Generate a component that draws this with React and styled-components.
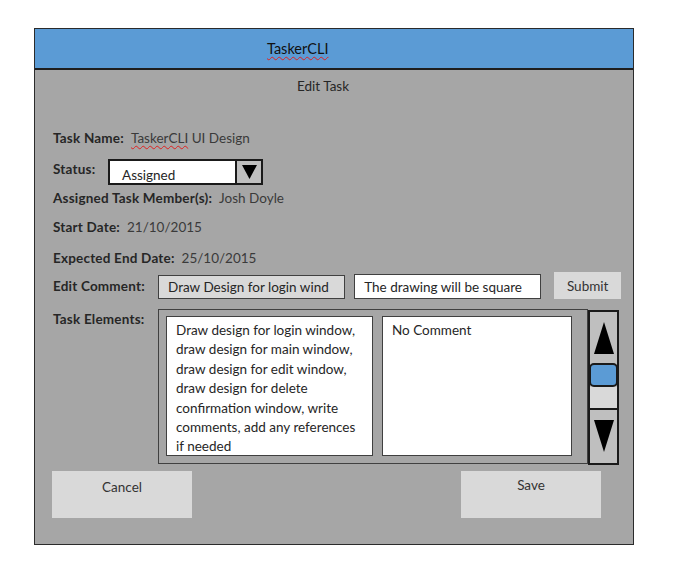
import React from 'react'
import styled, { createGlobalStyle } from 'styled-components'

const GlobalStyle = createGlobalStyle`
  body {
    margin: 0;
    background: #fff;
    font-family: Lato, "Open Sans", sans-serif;
  }
`

const Frame = styled.div`
  margin: 28px 0 0 34px;
  width: 600px;
  height: 517px;
  border: 1.5px solid #2b2b2b;
  box-sizing: border-box;
  display: flex;
  flex-direction: column;
  background: #a6a6a6;
`

const Header = styled.div`
  height: 41px;
  flex-shrink: 0;
  background: #5b9bd5;
  border-bottom: 2px solid #1f1f1f;
  box-sizing: border-box;
  display: flex;
  align-items: center;
  padding-left: 232px;
  font-size: 14.5px;
  color: #111;
`

const Misspelled = styled.span`
  text-decoration: underline wavy #e02020;
  text-decoration-thickness: 1px;
  text-underline-offset: 2px;
`

const Body = styled.div`
  flex: 1;
  display: flex;
  flex-direction: column;
  padding: 6px 12px 0 18px;
`

const Title = styled.div`
  line-height: 20px;
  font-size: 13.5px;
  color: #262626;
  padding-left: 244px;
`

const Row = styled.div`
  display: flex;
  align-items: ${p => p.$align || 'center'};
  margin-top: ${p => p.$mt}px;
  line-height: 20px;
  font-size: 13.5px;
  color: #3a3a3a;
`

const Label = styled.span`
  font-weight: 700;
  letter-spacing: 0.2px;
  color: #262626;
  width: ${p => (p.$w ? `${p.$w}px` : 'auto')};
  margin-right: ${p => (p.$w ? 0 : 7)}px;
  flex-shrink: 0;
  align-self: ${p => p.$self || 'auto'};
`

const Select = styled.div`
  width: 155px;
  height: 26px;
  box-sizing: border-box;
  border: 2px solid #1a1a1a;
  background: #fff;
  display: flex;
  align-self: flex-start;
`

const SelectText = styled.div`
  flex: 1;
  padding: 4px 0 0 12px;
  color: #262626;
  font-size: 13.5px;
`

const SelectArrow = styled.div`
  width: 24px;
  border-left: 2px solid #1a1a1a;
  background: #bfbfbf;
  display: flex;
  align-items: center;
  justify-content: center;
`

const Field = styled.div`
  width: 188px;
  height: ${p => p.$h}px;
  box-sizing: border-box;
  border: 1px solid #404040;
  background: ${p => (p.$grey ? '#d9d9d9' : '#fff')};
  margin-right: ${p => p.$mr}px;
  padding-left: 9px;
  display: flex;
  align-items: center;
  font-size: 13.5px;
  color: #262626;
  white-space: nowrap;
  overflow: hidden;
`

const SubmitButton = styled.div`
  width: 67px;
  height: 27px;
  background: #d9d9d9;
  display: flex;
  align-items: center;
  justify-content: center;
  font-size: 13.5px;
  color: #333;
  align-self: flex-start;
`

const ElementsPanel = styled.div`
  width: 430px;
  height: 155px;
  box-sizing: border-box;
  border: 1px solid #404040;
  display: flex;
  padding: 6px 0 0 7px;
  gap: 9px;
`

const TextBox = styled.div`
  width: ${p => p.$w}px;
  height: 140px;
  box-sizing: border-box;
  border: 1px solid #404040;
  background: #fff;
  padding: 4px 8px 0 9px;
  font-size: 13.5px;
  line-height: 19.4px;
  color: #262626;
`

const Scrollbar = styled.div`
  width: 31px;
  height: 155px;
  box-sizing: border-box;
  border: 2px solid #1a1a1a;
  background: #bfbfbf;
  display: flex;
  flex-direction: column;
  margin-top: 1px;
`

const ScrollEnd = styled.div`
  height: ${p => p.$h}px;
  display: flex;
  align-items: center;
  justify-content: center;
  border-top: ${p => (p.$top ? '2px solid #1a1a1a' : 'none')};
`

const Thumb = styled.div`
  height: 24px;
  margin: 0 -1px;
  background: #5b9bd5;
  border: 2px solid #1a1a1a;
  border-radius: 5px;
  box-sizing: border-box;
`

const Track = styled.div`
  height: 21px;
  background: #d9d9d9;
`

const Footer = styled.div`
  display: flex;
  justify-content: space-between;
  margin: 6px 20px 0 -1px;
`

const BigButton = styled.div`
  width: 140px;
  height: 47px;
  background: #d9d9d9;
  display: flex;
  justify-content: center;
  padding-top: ${p => p.$pt}px;
  box-sizing: border-box;
  font-size: 13.5px;
  color: #333;
`

function Triangle({ dir, w, h }) {
  const pts = dir === 'up' ? `0,${h} ${w / 2},0 ${w},${h}` : `0,0 ${w},0 ${w / 2},${h}`
  return (
    <svg width={w} height={h} viewBox={`0 0 ${w} ${h}`}>
      <polygon points={pts} fill="#000" />
    </svg>
  )
}

export default function App() {
  return (
    <>
      <GlobalStyle />
      <Frame>
        <Header>
          <Misspelled>TaskerCLI</Misspelled>
        </Header>
        <Body>
          <Title>Edit Task</Title>

          <Row $mt={32}>
            <Label>Task Name:</Label>
            <span><Misspelled>TaskerCLI</Misspelled> UI Design</span>
          </Row>

          <Row $mt={11} $align="flex-start">
            <Label $w={55}>Status:</Label>
            <Select>
              <SelectText>Assigned</SelectText>
              <SelectArrow><Triangle dir="down" w={15} h={14} /></SelectArrow>
            </Select>
          </Row>

          <Row $mt={3}>
            <Label>Assigned Task Member(s):</Label>
            <span>Josh Doyle</span>
          </Row>

          <Row $mt={9}>
            <Label>Start Date:</Label>
            <span>21/10/2015</span>
          </Row>

          <Row $mt={11}>
            <Label>Expected End Date:</Label>
            <span>25/10/2015</span>
          </Row>

          <Row $mt={4} $align="flex-end">
            <Label $w={105} $self="center">Edit Comment:</Label>
            <Field $grey $h={24} $mr={9}>Draw Design for login wind</Field>
            <Field $h={25} $mr={13}>The drawing will be square</Field>
            <SubmitButton>Submit</SubmitButton>
          </Row>

          <Row $mt={10} $align="flex-start">
            <Label $w={105}>Task Elements:</Label>
            <ElementsPanel>
              <TextBox $w={207}>
                Draw design for login window, draw design for main window, draw design for edit window, draw design for delete confirmation window, write comments, add any references if needed
              </TextBox>
              <TextBox $w={190}>No Comment</TextBox>
            </ElementsPanel>
            <Scrollbar>
              <ScrollEnd $h={52}><Triangle dir="up" w={20} h={32} /></ScrollEnd>
              <Thumb />
              <Track />
              <ScrollEnd $h={54} $top><Triangle dir="down" w={20} h={32} /></ScrollEnd>
            </Scrollbar>
          </Row>

          <Footer>
            <BigButton $pt={8}>Cancel</BigButton>
            <BigButton $pt={6}>Save</BigButton>
          </Footer>
        </Body>
      </Frame>
    </>
  )
}
